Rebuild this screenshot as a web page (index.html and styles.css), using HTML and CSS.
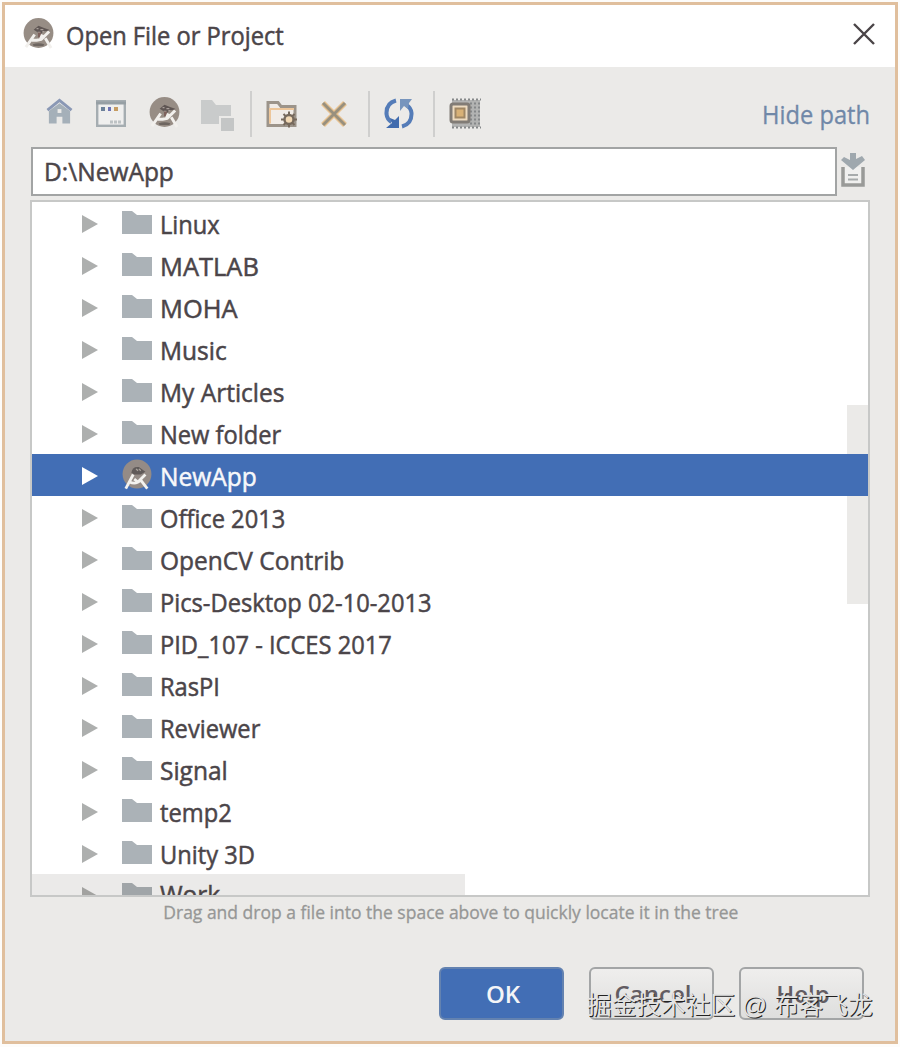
FILE: index.html
```html
<!DOCTYPE html>
<html lang="en">
<head>
<meta charset="utf-8">
<title>Open File or Project</title>
<link rel="stylesheet" href="styles.css">
</head>
<body>
<svg width="0" height="0" class="defs">
  <defs>
    <symbol id="studio" viewBox="0 0 32 32">
      <circle cx="16" cy="15.500" r="15.400" fill="#978d85"/>
      <path d="M11 12l5-4 5 2 6 2v1l-6 1-4 4-3-4z" fill="#5f5654"/>
      <path d="M14 11h2m2 1h3m-6 3h3m2-1h2" stroke="#aaa09a" stroke-width="1.400"/>
      <path d="M17 15v5" stroke="#7e625d" stroke-width="3"/>
      <path d="M3 30l9-13M9 23l5 0 5-1 8-8M20 17l-2 5M23 21l6 10" fill="none" stroke="#f2f0ed" stroke-width="3" stroke-linejoin="round"/>
      <path d="M10 27q6-2 12 0l-1 2H11z" fill="#6d6560"/>
    </symbol>
    <symbol id="studio-sel" viewBox="0 0 32 32">
      <circle cx="16" cy="15.500" r="15.400" fill="#948b86"/>
      <path d="M10 14q1-7 8-6l7 5-5 3h-7z" fill="#605a59"/>
      <path d="M15 10l2 2m1-2l2 2" stroke="#aaa39d" stroke-width="1.400"/>
      <path d="M12 16L4 31M25 16l-8 8-4-3M20 22l7 9M8 24q7 3 12-2" fill="none" stroke="#f3f2ef" stroke-width="3"/>
    </symbol>
    <symbol id="folder" viewBox="0 0 30 23"><path d="M0 0h10l5 4h15v19H0z" fill="#abb2b7"/></symbol>
    <symbol id="arrow" viewBox="0 0 16 18"><path d="M0 0l16 9-16 9z" fill="currentColor"/></symbol>
  </defs>
</svg>
<main class="dialog">
  <header class="titlebar">
    <svg class="logo"><use href="#studio"/></svg>
    <h1 class="title">Open File or Project</h1>
    <svg class="close" viewBox="0 0 24 24"><path d="M2 2l20 20M22 2L2 22" stroke="#4a4447" stroke-width="2.400"/></svg>
  </header>
  <nav class="toolbar">
    <svg class="home" viewBox="0 0 28 28"><path d="M3 13L14 5l11 8v13h-8v-7h-6v7H3z" fill="#a5b0b9"/><path d="M1.500 12L14 2l12.500 10" fill="none" stroke="#8a98b5" stroke-width="3"/><rect x="12" y="11" width="4" height="4" fill="#ebeae8"/></svg>
    <svg class="desktop" viewBox="0 0 30 27"><rect x="1.200" y="1.200" width="27.600" height="24.600" fill="#efefee" stroke="#a5adb1" stroke-width="2.400"/><path d="M0 3h30" stroke="#969fa4" stroke-width="3"/><path d="M5 9h4" stroke="#6c819a" stroke-width="4"/><path d="M12 9h3" stroke="#6d72b5" stroke-width="4"/><path d="M18 9h4" stroke="#c69c62" stroke-width="4"/><path d="M14 22h12" stroke="#bdc2c4" stroke-width="3" stroke-dasharray="3 1"/></svg>
    <svg class="studio"><use href="#studio"/></svg>
    <svg class="module" viewBox="0 0 33 31"><path d="M0 0h11l4 5h15v11H18v8H0z" fill="#c9cbcb"/><rect x="20" y="18" width="13" height="13" fill="#c4c6c6"/></svg>
    <i class="sep"></i>
    <svg class="newfolder" viewBox="0 0 32 28"><path d="M2 2h10l3 4h14v19H2z" fill="#f1ece7" stroke="#9c948a" stroke-width="3"/><path d="M3 8.500h25M4 9v14" stroke="#edc69a" stroke-width="2"/><g stroke="#76695c" stroke-width="2"><path d="M23 11v16M15 19h16M17.500 13.500l11 11M28.500 13.500l-11 11"/><circle cx="23" cy="19" r="4.500" fill="#f2d9b5" stroke-width="2.400"/></g></svg>
    <svg class="delete" viewBox="0 0 26 26"><path d="M2 2l22 22M24 2L2 24" stroke="#e7c18f" stroke-width="5.500"/><path d="M2 2l22 22M24 2L2 24" stroke="#98907e" stroke-width="3"/></svg>
    <i class="sep"></i>
    <svg class="refresh" viewBox="0 0 30 31"><g fill="none" stroke="#547cb8" stroke-width="4"><path d="M12 2.500Q2 5 2.500 16q.5 5 5 8"/><path d="M18 28.500Q28 26 27.500 15q-.5-5-5-8"/></g><path d="M2 30h13V18l-4 4-5-2 2 5z" fill="#416cae"/><path d="M28 1H16v12l4-5 4 3 1-6z" fill="#7795bd"/></svg>
    <i class="sep"></i>
    <svg class="hidden" viewBox="0 0 33 31"><path d="M3 2h28v27H3z" fill="#b2b3b2"/><path d="M3 1.500h29M3 29.500h29M21 5.500h11M21 9.500h11M21 13.500h11M21 17.500h11M21 21.500h11M21 25.500h11" stroke="#858889" stroke-width="2" stroke-dasharray="2 2"/><rect x="2" y="6" width="18" height="18" rx="2" fill="#eddbc0" stroke="#817c76" stroke-width="3"/><rect x="6.500" y="10.500" width="9" height="9" fill="#d8b176" stroke="#a08764" stroke-width="2"/></svg>
    <a class="hide"><span class="t">Hide path</span></a>
  </nav>
  <div class="pathrow">
    <div class="path"><span class="t wide">D:\NewApp</span></div>
    <svg class="history" viewBox="0 0 24 34"><path d="M2 14v18h20V14" fill="#f0f0ef" stroke="#999a98" stroke-width="3.500"/><path d="M9 0h6v6l6-3 3 4-12 10L0 7l3-3 6 3z" fill="#9fa8ae"/><path d="M7 22h10M7 26.500h10" stroke="#a7abac" stroke-width="2"/></svg>
  </div>
  <section class="tree">
    <div class="row"><svg class="arrow"><use href="#arrow"/></svg><svg class="folder"><use href="#folder"/></svg><span class="t">Linux</span></div>
    <div class="row"><svg class="arrow"><use href="#arrow"/></svg><svg class="folder"><use href="#folder"/></svg><span class="t caps">MATLAB</span></div>
    <div class="row"><svg class="arrow"><use href="#arrow"/></svg><svg class="folder"><use href="#folder"/></svg><span class="t caps">MOHA</span></div>
    <div class="row"><svg class="arrow"><use href="#arrow"/></svg><svg class="folder"><use href="#folder"/></svg><span class="t wide">Music</span></div>
    <div class="row"><svg class="arrow"><use href="#arrow"/></svg><svg class="folder"><use href="#folder"/></svg><span class="t wide">My Articles</span></div>
    <div class="row"><svg class="arrow"><use href="#arrow"/></svg><svg class="folder"><use href="#folder"/></svg><span class="t">New folder</span></div>
    <div class="row selected"><svg class="arrow"><use href="#arrow"/></svg><svg class="app"><use href="#studio-sel"/></svg><span class="t wide">NewApp</span></div>
    <div class="row"><svg class="arrow"><use href="#arrow"/></svg><svg class="folder"><use href="#folder"/></svg><span class="t">Office 2013</span></div>
    <div class="row"><svg class="arrow"><use href="#arrow"/></svg><svg class="folder"><use href="#folder"/></svg><span class="t wide">OpenCV Contrib</span></div>
    <div class="row"><svg class="arrow"><use href="#arrow"/></svg><svg class="folder"><use href="#folder"/></svg><span class="t">Pics-Desktop 02-10-2013</span></div>
    <div class="row"><svg class="arrow"><use href="#arrow"/></svg><svg class="folder"><use href="#folder"/></svg><span class="t">PID_107 - ICCES 2017</span></div>
    <div class="row"><svg class="arrow"><use href="#arrow"/></svg><svg class="folder"><use href="#folder"/></svg><span class="t">RasPI</span></div>
    <div class="row"><svg class="arrow"><use href="#arrow"/></svg><svg class="folder"><use href="#folder"/></svg><span class="t">Reviewer</span></div>
    <div class="row"><svg class="arrow"><use href="#arrow"/></svg><svg class="folder"><use href="#folder"/></svg><span class="t wide">Signal</span></div>
    <div class="row"><svg class="arrow"><use href="#arrow"/></svg><svg class="folder"><use href="#folder"/></svg><span class="t">temp2</span></div>
    <div class="row"><svg class="arrow"><use href="#arrow"/></svg><svg class="folder"><use href="#folder"/></svg><span class="t">Unity 3D</span></div>
    <div class="row"><svg class="arrow"><use href="#arrow"/></svg><svg class="folder"><use href="#folder"/></svg><span class="t wide">Work</span></div>
    <i class="vthumb"></i><i class="hthumb"></i>
  </section>
  <p class="hint"><span>Drag and drop a file into the space above to quickly locate it in the tree</span></p>
  <footer class="buttons">
    <button class="btn primary">OK</button>
    <button class="btn">Cancel</button>
    <button class="btn">Help</button>
  </footer>
</main>
<div class="watermark">掘金技术社区 @ 布客飞龙</div>
</body>
</html>
```
FILE: styles.css
```css
* { box-sizing: border-box; }
body { margin: 0; width: 900px; height: 1047px; padding: 2px 2px 3px; background: #fdfcfa; overflow: hidden; font-family: "Open Sans", "Noto Sans", sans-serif; font-size: 25px; color: #4b4549; position: relative; }
.defs { position: absolute; }
svg { display: block; flex: none; }
.dialog { width: 896px; height: 1042px; border: 3px solid #e0bf9d; background: #ebeae8; display: flex; flex-direction: column; }
.titlebar { height: 62px; flex: none; background: #fff; display: flex; align-items: center; padding: 0 19px 0 18px; }
.logo { width: 31px; height: 31px; margin-bottom: 6px; }
.title { margin: 0 0 3px 12px; font-size: 25px; font-weight: 400; white-space: nowrap; transform: scaleX(.947); transform-origin: left; -webkit-text-stroke: .5px; }
.close { width: 24px; height: 24px; margin-left: auto; margin-bottom: 4px; }
.t { display: inline-block; white-space: nowrap; transform: scaleX(.947); transform-origin: left; -webkit-text-stroke: .5px; }
.t.wide { transform: scaleX(.98); }
.t.caps { transform: scaleX(1.018); }
.toolbar { height: 80px; flex: none; display: flex; align-items: center; padding: 13px 25px 0 41px; }
.home { width: 27px; height: 28px; margin-top: -4px; }
.desktop { width: 30px; height: 27px; margin-left: 23px; }
.studio { width: 31px; height: 31px; margin-left: 23px; margin-top: -2px; }
.module { width: 33px; height: 31px; margin-left: 21px; margin-top: 3px; }
.sep { width: 2px; height: 46px; background: #cfcfce; margin-left: 16px; }
.newfolder { width: 32px; height: 29px; margin-left: 14px; margin-top: 2px; }
.delete { width: 26px; height: 26px; margin-left: 23px; }
.delete + .sep { margin-left: 21px; }
.refresh { width: 30px; height: 31px; margin-left: 14px; }
.refresh + .sep { margin-left: 19px; }
.hidden { width: 33px; height: 31px; margin-left: 14px; }
.hide { margin-left: auto; color: #7088a8; }
.hide .t { transform-origin: right; -webkit-text-stroke: .3px; }
.pathrow { display: flex; align-items: center; padding-left: 26px; height: 49px; flex: none; }
.path { width: 806px; height: 49px; border: 2px solid #a2a4a4; background: #fff; padding: 0 0 1px 11px; display: flex; align-items: center; }
.history { width: 24px; height: 34px; margin-left: 4px; margin-top: -3px; }
.tree { position: relative; flex: none; margin: 4px 0 0 25px; width: 840px; height: 697px; border: 2px solid #c7c8c7; background: #fff; overflow: hidden; }
.row { height: 42px; display: flex; align-items: center; padding-left: 50px; color: #4b4549; }
.arrow { width: 16px; height: 18px; color: #adafae; margin-top: 2px; }
.folder, .app { margin-left: 24px; margin-right: 8px; }
.folder { width: 30px; height: 23px; margin-top: -2px; }
.app { width: 30px; height: 31px; margin-top: -2px; }
.row .t { margin-top: 1px; }
.row:last-of-type .t { margin-top: -2px; }
.selected { position: relative; z-index: 2; background: #426eb5; color: #f7f8fa; }
.selected .arrow { color: #fff; }
.vthumb { position: absolute; left: 815px; top: 203px; width: 21px; height: 199px; background: #ebeae8; }
.hthumb { position: absolute; left: 0; top: 672px; width: 433px; height: 21px; background: rgba(70, 65, 55, .11); }
.hint { margin: 0; height: 29px; flex: none; display: flex; justify-content: center; align-items: center; font-size: 18px; color: #969796; }
.hint span { white-space: nowrap; transform: translateX(1px) scaleX(.972); -webkit-text-stroke: .3px; }
.buttons { display: flex; justify-content: flex-end; gap: 25px; padding: 41px 31px 0 0; }
.btn { width: 125px; height: 53px; padding: 0 0 1px 3px; border: 2px solid #a3a5a6; border-radius: 6px; background: linear-gradient(#efeeed, #dededd); font: 600 24px "Open Sans", sans-serif; color: #625c62; }
.primary { background: #426eb5; color: #f4f5f7; border-color: #6382b0; }
.watermark { position: absolute; left: 587px; top: 988px; font: 24.700px/36px "Liberation Sans", "Noto Sans CJK SC", sans-serif; white-space: nowrap; color: #e3e3e2; text-shadow: 1px 1px 0 #222; }
```
